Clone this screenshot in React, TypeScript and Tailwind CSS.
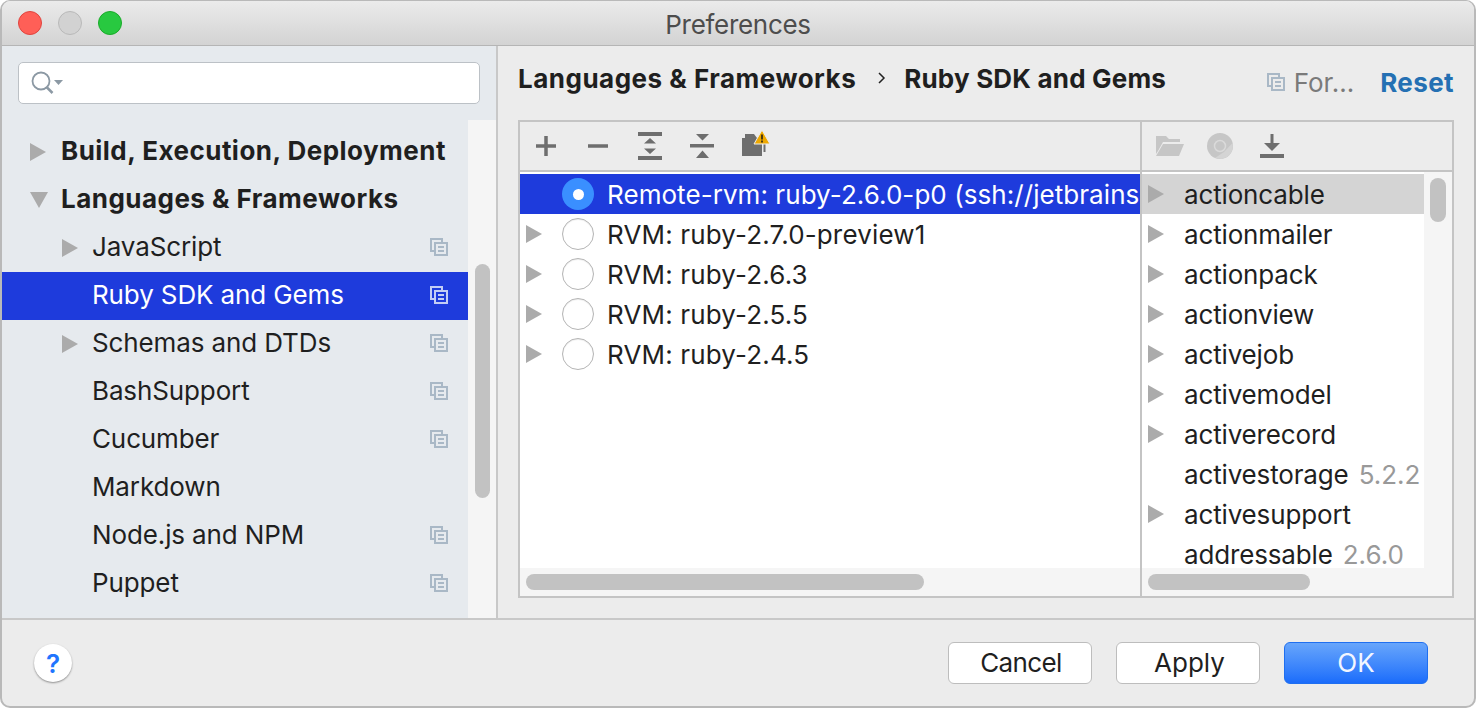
const FONT = 'font-["Inter","Liberation_Sans",sans-serif]'

const NAV = [
  { label: 'Build, Execution, Deployment', depth: 0, arrow: 'right', bold: true },
  { label: 'Languages & Frameworks', depth: 0, arrow: 'down', bold: true },
  { label: 'JavaScript', depth: 1, arrow: 'right', copy: true },
  { label: 'Ruby SDK and Gems', depth: 1, selected: true, copy: true },
  { label: 'Schemas and DTDs', depth: 1, arrow: 'right', copy: true },
  { label: 'BashSupport', depth: 1, copy: true },
  { label: 'Cucumber', depth: 1, copy: true },
  { label: 'Markdown', depth: 1 },
  { label: 'Node.js and NPM', depth: 1, copy: true },
  { label: 'Puppet', depth: 1, copy: true },
]

const SDKS = [
  'RVM: ruby-2.7.0-preview1',
  'RVM: ruby-2.6.3',
  'RVM: ruby-2.5.5',
  'RVM: ruby-2.4.5',
]

const GEMS: { name: string; version?: string }[] = [
  { name: 'actioncable' },
  { name: 'actionmailer' },
  { name: 'actionpack' },
  { name: 'actionview' },
  { name: 'activejob' },
  { name: 'activemodel' },
  { name: 'activerecord' },
  { name: 'activestorage', version: '5.2.2' },
  { name: 'activesupport' },
  { name: 'addressable', version: '2.6.0' },
]

function ArrowRight({ className = 'text-[#ababab]' }: { className?: string }) {
  return (
    <svg className={`h-[18px] w-4 shrink-0 ${className}`} viewBox="0 0 16 18" fill="currentColor">
      <path d="M0 0 16 9 0 18z" />
    </svg>
  )
}

function ArrowDown() {
  return (
    <svg className="h-4 w-[18px] shrink-0 text-[#ababab]" viewBox="0 0 18 16" fill="currentColor">
      <path d="M0 0h18L9 16z" />
    </svg>
  )
}

function CopyIcon({ color = '#a9b8c6' }: { color?: string }) {
  return (
    <svg className="h-[18px] w-[18px]" viewBox="0 0 18 18" fill="none" stroke={color} strokeWidth="2">
      <path d="M5 13H1V1h11v4" />
      <path d="M5 5h12v12H5z" />
      <path d="M8 9h6M8 13h6" />
    </svg>
  )
}

function Radio({ selected }: { selected?: boolean }) {
  if (selected) {
    return (
      <span className="flex h-8 w-8 items-center justify-center rounded-full bg-[#3a8fff]">
        <span className="h-[11px] w-[11px] rounded-full bg-white" />
      </span>
    )
  }
  return <span className="h-8 w-8 rounded-full border border-[#b5b5b5] bg-white shadow-[inset_0_1px_1px_rgba(0,0,0,0.08)]" />
}

function ToolbarIcons() {
  const c = '#6e6e6e'
  return (
    <div className="flex h-[50px] items-center border-b-2 border-[#c4c4c4]">
      <svg className="ml-[16px] h-5 w-5" viewBox="0 0 20 20" fill={c}>
        <path d="M8.250 0h3.500v8.250H20v3.500h-8.250V20h-3.500v-8.250H0v-3.500h8.250z" />
      </svg>
      <svg className="ml-[32px] h-5 w-5" viewBox="0 0 20 20" fill={c}>
        <path d="M0 8.250h20v3.500H0z" />
      </svg>
      <svg className="ml-[30px] h-[28px] w-6" viewBox="0 0 24 28" fill={c}>
        <path d="M0 0h24v4H0zM0 24h24v4H0zM6 11.500 12 6l6 5.500zM6 16.500h12L12 22z" />
      </svg>
      <svg className="ml-[28px] h-[26px] w-6" viewBox="0 0 24 26" fill={c}>
        <path d="M6 1h13l-6.500 6.500zM0 11h24v3.500H0zM12.500 17.500 19 25H6z" />
      </svg>
      <svg className="mb-[4px] ml-[28px] h-[28px] w-[28px]" viewBox="0 0 28 28">
        <path d="M0 8h20v18H0zM3 4h9l3 4H3z" fill={c} />
        <path d="M21.500 14h2v8h-2z" fill={c} />
        <path d="M20 0 28 14H12z" fill="#eea800" stroke="#ececec" strokeWidth="1" />
        <path d="M19 4.500h2v5h-2zM19 10.500h2v2h-2z" fill="#4b3a10" />
      </svg>
    </div>
  )
}

function GemToolbar() {
  return (
    <div className="flex h-[50px] items-center border-b-2 border-[#c4c4c4]">
      <svg className="ml-[14px] h-[20px] w-7" viewBox="0 0 28 20" fill="#c6c6c6">
        <path d="M0 0h10l3 3h11v3H7L2 15 0 18z" />
        <path d="M7 8h21l-5 12H0z" />
      </svg>
      <svg className="ml-[23px] h-[26px] w-[26px]" viewBox="0 0 26 26">
        <circle cx="13" cy="13" r="13" fill="#c6c6c6" />
        <path d="M25.500 10A13 13 0 0 1 14 26l-6-1 9-6z" fill="#d4d4d4" />
        <circle cx="13" cy="13" r="5.500" fill="#c6c6c6" stroke="#dadada" strokeWidth="1.500" />
      </svg>
      <svg className="ml-[27px] h-[24px] w-6" viewBox="0 0 24 24" fill="#6e6e6e">
        <path d="M10.500 0h3v9H20l-8 8-8-8h6.500zM0 20h24v4H0z" />
      </svg>
    </div>
  )
}

export default function App() {
  return (
    <div className={`${FONT} h-[708px] w-[1476px] overflow-hidden bg-white text-[26px] text-[#1f1f1f]`}>
      <div className="flex h-full flex-col overflow-hidden rounded-[10px] border-2 border-t border-[#b9b9b9] bg-[#ececec]">
        {/* title bar */}
        <div className="grid h-[45px] shrink-0 grid-cols-[1fr_auto_1fr] items-center border-b border-[#b5b5b5] bg-gradient-to-b from-[#ebebeb] to-[#d3d3d3]">
          <div className="flex gap-4 pl-[16px]">
            <span className="h-6 w-6 rounded-full border border-[#e0443e] bg-[#ff5f57]" />
            <span className="h-6 w-6 rounded-full border border-[#b9b9b9] bg-[#d2d2d2]" />
            <span className="h-6 w-6 rounded-full border border-[#1aab29] bg-[#28c940]" />
          </div>
          <span className="pt-[3px] tracking-[-0.3px] text-[#4d4d4d]">Preferences</span>
          <span />
        </div>

        <div className="flex min-h-0 flex-1">
          {/* sidebar */}
          <div className="flex w-[496px] shrink-0 flex-col border-r-2 border-[#c8c8c8] bg-[#e6eaee]">
            <div className="h-[74px] shrink-0 pl-4 pr-4 pt-4">
              <div className="flex h-[42px] w-[462px] items-center rounded-[5px] border border-[#bcc1c6] bg-white pl-[12px]">
                <svg className="h-6 w-[32px]" viewBox="0 0 32 24" fill="none">
                  <circle cx="10" cy="10" r="8.500" stroke="#8c99a4" strokeWidth="1.800" />
                  <path d="m15.500 16 6 6" stroke="#8c99a4" strokeWidth="2.500" />
                  <path d="M23 9h9l-4.500 5z" fill="#8c99a4" />
                </svg>
              </div>
            </div>
            <div className="flex min-h-0 flex-1">
              <div className="w-[466px] shrink-0 pt-2">
                {NAV.map(item => (
                  <div
                    key={item.label}
                    className={`flex h-12 items-center ${item.selected ? 'bg-[#1e3bdc] text-white' : ''}`}
                  >
                    <span className={`flex shrink-0 items-center ${item.depth ? 'w-[90px] pl-[60px]' : 'w-[59px] pl-[28px]'}`}>
                      {item.arrow === 'right' && <ArrowRight />}
                      {item.arrow === 'down' && <ArrowDown />}
                    </span>
                    <span className={`mb-[4px] flex-1 whitespace-nowrap ${item.bold ? 'font-bold tracking-[0.47px]' : 'tracking-[-0.12px]'}`}>{item.label}</span>
                    {item.copy && (
                      <span className="mb-[2px] mr-[20px] flex">
                        <CopyIcon color={item.selected ? '#c3cdf5' : '#a9b8c6'} />
                      </span>
                    )}
                  </div>
                ))}
              </div>
              <div className="flex-1 bg-[#f5f5f5] pl-[7px]">
                <div className="mt-[144px] h-[234px] w-[15px] rounded-full bg-[#c2c2c2]" />
              </div>
            </div>
          </div>

          {/* content */}
          <div className="flex min-w-0 flex-1 flex-col pl-5 pr-[20px]">
            <div className="flex h-[74px] shrink-0 items-center pb-[10px]">
              <span className="font-bold tracking-[0.5px] whitespace-nowrap">Languages &amp; Frameworks</span>
              <svg className="ml-[22px] h-3 w-2" viewBox="0 0 8 12" fill="none" stroke="#222" strokeWidth="1.500">
                <path d="m1 1 5 5-5 5" />
              </svg>
              <span className="ml-[18px] font-bold tracking-[0.18px] whitespace-nowrap">Ruby SDK and Gems</span>
              <span className="ml-auto flex items-center pt-2">
                <CopyIcon />
                <span className="ml-[9px] text-[#7a7a7a]">For...</span>
                <span className="ml-[26px] font-bold tracking-[0.4px] text-[#2470b3]">Reset</span>
              </span>
            </div>

            <div className="flex h-[478px] shrink-0 border-2 border-[#c4c4c4]">
              {/* sdk list */}
              <div className="flex w-[620px] shrink-0 flex-col border-r-2 border-[#c4c4c4] box-content">
                <ToolbarIcons />
                <div className="min-h-0 flex-1 overflow-hidden bg-white pt-[2px]">
                  <div className="flex h-10 items-center overflow-hidden bg-[#1e3bdc] pl-[42px] text-white">
                    <span className="flex shrink-0"><Radio selected /></span>
                    <span className="ml-[13px] whitespace-nowrap tracking-[0.06px]">Remote-rvm: ruby-2.6.0-p0 (ssh://jetbrains</span>
                  </div>
                  {SDKS.map(sdk => (
                    <div key={sdk} className="flex h-10 items-center pl-[6px]">
                      <ArrowRight />
                      <span className="ml-[20px] flex"><Radio /></span>
                      <span className="ml-[13px] whitespace-nowrap tracking-[0.15px]">{sdk}</span>
                    </div>
                  ))}
                </div>
                <div className="flex h-[28px] shrink-0 items-center bg-[#f5f5f5] pl-[6px]">
                  <div className="h-4 w-[398px] rounded-full bg-[#c2c2c2]" />
                </div>
              </div>

              {/* gem list */}
              <div className="flex min-w-0 flex-1 flex-col">
                <GemToolbar />
                <div className="flex min-h-0 flex-1">
                  <div className="w-[282px] shrink-0 overflow-hidden bg-white pt-[2px]">
                    {GEMS.map((gem, i) => (
                      <div key={gem.name} className={`flex h-10 items-center ${i === 0 ? 'bg-[#d4d4d4]' : ''}`}>
                        <span className="flex w-[42px] shrink-0 pl-[6px]">
                          {!gem.version && <ArrowRight />}
                        </span>
                        <span className="whitespace-nowrap tracking-[-0.15px]">{gem.name}</span>
                        {gem.version && <span className="ml-[10px] whitespace-nowrap text-[#999999]">{gem.version}</span>}
                      </div>
                    ))}
                  </div>
                  <div className="flex-1 bg-[#f5f5f5] pl-[6px] pt-[6px]">
                    <div className="h-[44px] w-4 rounded-full bg-[#c2c2c2]" />
                  </div>
                </div>
                <div className="flex h-[28px] shrink-0 items-center bg-[#f5f5f5] pl-[6px]">
                  <div className="h-4 w-[162px] rounded-full bg-[#c2c2c2]" />
                </div>
              </div>
            </div>
          </div>
        </div>

        {/* footer */}
        <div className="flex h-[88px] shrink-0 items-center border-t-2 border-[#c8c8c8] pl-[32px] pr-[46px]">
          <span className="flex h-[38px] w-[38px] items-center justify-center rounded-full bg-white text-[26px] font-semibold text-[#1f75fe] shadow-[0_1px_2px_rgba(0,0,0,0.4)]">?</span>
          <div className="ml-auto flex gap-6">
            <button className="h-[42px] w-[144px] rounded-[6px] border border-[#bdbdbd] bg-white pb-[2px] pl-[2px] tracking-[-0.6px] text-[#1f1f1f]">Cancel</button>
            <button className="h-[42px] w-[144px] rounded-[6px] border border-[#bdbdbd] bg-white pb-[2px] pl-[3px] text-[#1f1f1f]">Apply</button>
            <button className="h-[42px] w-[144px] rounded-[6px] border border-[#1f6ff0] bg-gradient-to-b from-[#67a5fb] to-[#1a6cfb] pb-[2px] text-[#f2f6ff]">OK</button>
          </div>
        </div>
      </div>
    </div>
  )
}
